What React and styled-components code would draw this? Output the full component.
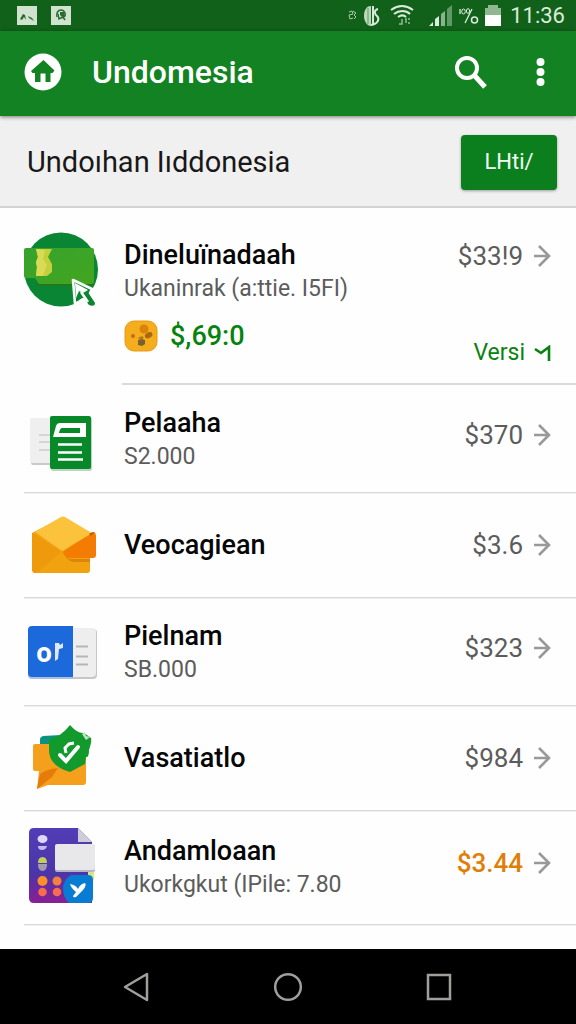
import React from "react";
import styled, { createGlobalStyle, ThemeProvider } from "styled-components";

const theme = {
  colors: {
    statusBar: "#12611b",
    primary: "#138222",
    button: "#0b7f1d",
    green: "#07820f",
    orange: "#e07f08",
    text: "#060606",
    gray: "#5c5c5c",
    line: "#d9dadb",
    subheader: "#f0f0f0",
  },
};

const GlobalStyle = createGlobalStyle`
  * {
    box-sizing: border-box;
  }

  body {
    margin: 0;
    background: #fefefe;
    font-family: Roboto, "Liberation Sans", sans-serif;
  }

  button {
    border: 0;
    padding: 0;
    background: none;
    font: inherit;
    color: inherit;
    cursor: pointer;
  }

  h1, h2, h3, p, ul {
    margin: 0;
    padding: 0;
    font-weight: 400;
  }

  svg {
    display: block;
    flex: none;
  }
`;

const Page = styled.div`
  display: flex;
  flex-direction: column;
  min-height: 100vh;
`;

const StatusBar = styled.div`
  display: flex;
  align-items: center;
  justify-content: space-between;
  height: 31px;
  padding: 0 11px 0 17px;
  background: ${({ theme }) => theme.colors.statusBar};
  color: #dcebdc;
`;

const StatusGroup = styled.div`
  display: flex;
  align-items: center;
  gap: ${({ gap }) => gap}px;
`;

const Clock = styled.time`
  padding-left: 3px;
  font-size: 22px;
  line-height: 28px;
`;

const AppBar = styled.header`
  display: flex;
  align-items: center;
  height: 85px;
  padding: 0 31px 4px 24px;
  background: ${({ theme }) => theme.colors.primary};
  box-shadow: 0 1px 4px rgba(0, 0, 0, 0.5);
  color: #fff;
  z-index: 1;
`;

const AppTitle = styled.h1`
  flex: 1;
  padding-left: 30px;
  font-size: 32px;
  line-height: 40px;
  font-weight: 500;
`;

const AppActions = styled.div`
  display: flex;
  align-items: center;
  gap: 48px;
`;

const Subheader = styled.div`
  display: flex;
  align-items: center;
  justify-content: space-between;
  height: 92px;
  padding: 2px 19px 0 27px;
  background: ${({ theme }) => theme.colors.subheader};
  border-bottom: 2px solid #d2d2d3;
`;

const SubheaderTitle = styled.h2`
  font-size: 29px;
  line-height: 36px;
  color: #181818;
`;

const ActionButton = styled.button`
  && {
    width: 96px;
    height: 55px;
    border-radius: 4px;
    background: ${({ theme }) => theme.colors.button};
    box-shadow: 0 1px 3px rgba(0, 0, 0, 0.35);
    color: #f2fff2;
    font-size: 22px;
    line-height: 28px;
  }
`;

const List = styled.ul`
  flex: 1;
  list-style: none;
`;

const paddings = {
  featured: "24px 25px 14px 0",
  double: "16px 25px 15px 0",
  single: "14px 25px 14px 0",
  last: "17px 25px 18px 0",
};

const Item = styled.li`
  display: flex;
  flex-wrap: wrap;
  column-gap: 24px;
  margin-left: 24px;
  padding: ${({ kind }) => paddings[kind]};
  border-bottom: ${({ kind, theme }) =>
    kind === "featured" ? "0" : `1px solid ${theme.colors.line}`};
  box-shadow: ${({ kind }) => (kind === "featured" ? "none" : "0 1px 0 #eeeeef")};
`;

const FeaturedLine = styled.li`
  height: 2px;
  margin-left: 122px;
  background: ${({ theme }) => theme.colors.line};
`;

const ItemBody = styled.div`
  flex: 1;
  display: flex;
  flex-direction: column;
  justify-content: ${({ featured }) => (featured ? "flex-start" : "center")};
  padding: ${({ featured }) => (featured ? "5px 0 13px" : "0")};
`;

const ItemName = styled.h3`
  font-size: 27px;
  line-height: 36px;
  font-weight: 500;
  color: ${({ theme }) => theme.colors.text};
`;

const ItemInfo = styled.p`
  font-size: 23px;
  line-height: 32px;
  color: ${({ theme }) => theme.colors.gray};
`;

const Reward = styled.div`
  display: flex;
  align-items: center;
  gap: 12px;
  padding-top: 11px;
  font-size: 27px;
  line-height: 40px;
  font-weight: 500;
  color: ${({ theme }) => theme.colors.green};
`;

const ItemSide = styled.div`
  display: flex;
  flex-direction: column;
  align-items: flex-end;
  justify-content: ${({ featured }) => (featured ? "space-between" : "center")};
  padding-top: ${({ featured }) => (featured ? "8px" : "0")};
  padding-bottom: ${({ raised }) => (raised ? "8px" : "0")};
`;

const PriceButton = styled.button`
  && {
    display: flex;
    align-items: center;
    gap: 10px;
    font-size: 26px;
    line-height: 32px;
    color: ${({ highlight, theme }) =>
      highlight ? theme.colors.orange : theme.colors.gray};
    font-weight: ${({ highlight }) => (highlight ? 500 : 400)};
  }
`;

const VersionButton = styled.button`
  && {
    display: flex;
    align-items: center;
    gap: 9px;
    font-size: 23px;
    line-height: 32px;
    color: ${({ theme }) => theme.colors.green};
  }
`;

const NavBar = styled.nav`
  display: flex;
  align-items: center;
  justify-content: center;
  gap: 122px;
  height: 75px;
  background: #000;
`;

const PictureStatusIcon = () => (
  <svg width="20" height="19" viewBox="0 0 20 19">
    <rect width="20" height="19" fill="#cfe3cf" />
    <path d="M3 13 6 8l2 1 1 5-2-3-2 3ZM11 10l4 2 2 3-5-3Z" fill="#2c6a30" />
  </svg>
);

const GlobeStatusIcon = () => (
  <svg width="20" height="19" viewBox="0 0 20 19">
    <rect width="20" height="19" fill="#cfe3cf" />
    <path d="M6 11c-1-4 1-7 4-7s5 3 4 6l-2 1" fill="none" stroke="#2c6a30" strokeWidth="1.500" />
    <path d="M9 6h4l1 4-3 1-2-2Z" fill="#2c6a30" />
    <path d="m7 8 1 5 4-2 2 3" fill="none" stroke="#2c6a30" strokeWidth="1.500" />
  </svg>
);

const StatusIcons = () => (
  <svg width="105" height="24" viewBox="351 2 105 24" fill="none">
    <path
      d="m352 10 3-1 1 3-4 1 1 4 3-1M356 9l3 2-2 2 2 2-2 2"
      stroke="#a9cbaa"
      strokeWidth="1"
    />
    <path d="M374 4c-5 0-7 5-7 10s3 10 7 10Z" fill="#bdd8bd" />
    <path d="M371 6v16" stroke="#5f9963" />
    <path
      d="M376 4v19M381 7c-4 1-4 5-1 7 3 3 1 8-6 9"
      stroke="#d8ead8"
      strokeWidth="2"
    />
    <path
      d="M394 8c7-5 15-5 22 0M397 12c5-4 12-4 16 0M401 15c3-2 6-2 8 0"
      stroke="#dcebdc"
      strokeWidth="2"
    />
    <path d="M405 17v5h-3M409 16v5m3-5v2m0 2v2" stroke="#92bd94" strokeWidth="1.500" />
    <path d="m432 24 4-4v4Z M438 17l4-3v10h-4Z" fill="#dcebdc" />
    <path d="m444 12 4-3v15h-4Z" fill="#89b58b" />
    <path d="m450 7 5-4v21h-5Z" fill="#5f9963" />
  </svg>
);

const PercentIcon = () => (
  <svg width="20" height="18" viewBox="0 0 20 18" fill="none" stroke="#dcebdc">
    <path d="M1 2v5M13 2 6 16" strokeWidth="1.300" />
    <ellipse cx="4.500" cy="4.500" rx="1.800" ry="2.500" />
    <ellipse cx="9" cy="4" rx="1.600" ry="2.300" />
    <circle cx="15.500" cy="13" r="3" strokeWidth="1.500" />
  </svg>
);

const BatteryIcon = () => (
  <svg width="16" height="21" viewBox="0 0 16 21">
    <path d="M3 0h10v3h3v9H0V3h3Z" fill="#8fb890" />
    <path d="M0 10h16v11H0Z" fill="#fff" />
  </svg>
);

const HomeIcon = () => (
  <svg width="38" height="38" viewBox="0 0 38 38">
    <circle cx="19" cy="19" r="18.500" fill="#fff" />
    <path
      d="M19.500 7 30.500 17.500 28.500 20H26.500v9h-5v-8.500h-5V29H11V20H8.500L7 18Z"
      fill="#138222"
    />
  </svg>
);

const SearchIcon = () => (
  <svg width="34" height="34" viewBox="0 0 34 34" fill="none" stroke="#fff">
    <circle cx="13" cy="13" r="10" strokeWidth="4" />
    <path d="m20 20 11 12" strokeWidth="5" />
  </svg>
);

const MoreIcon = () => (
  <svg width="9" height="28" viewBox="0 0 9 28" fill="#fff">
    <circle cx="4.500" cy="4" r="4" />
    <circle cx="4.500" cy="14" r="4" />
    <circle cx="4.500" cy="24" r="4" />
  </svg>
);

const ArrowIcon = () => (
  <svg width="18" height="22" viewBox="0 0 18 22" fill="none">
    <path d="M1 11h15M6 1l10 10L6 21" stroke="#999" strokeWidth="2.600" />
  </svg>
);

const VersionIcon = () => (
  <svg width="17" height="17" viewBox="0 0 17 17" fill="none">
    <path d="m1 4 6 4 8-6v14" stroke="#07820f" strokeWidth="2.600" />
  </svg>
);

const CoinIcon = () => (
  <svg width="34" height="32" viewBox="0 0 34 32">
    <rect x="1" y="1" width="32" height="30" rx="9" fill="#f5ad1d" stroke="#e79b13" />
    <circle cx="20" cy="9" r="4.500" fill="#d9820d" />
    <ellipse cx="24.500" cy="15.500" rx="4" ry="2.700" transform="rotate(-25 24 15)" fill="#a7690f" />
    <circle cx="9" cy="16" r="2" fill="#bc710c" />
    <path d="m14 20 4-1 3 1v4l-3 2-4-1Z" fill="#776232" />
    <path d="m14 18 4-2 2 2-4 2Z" fill="#b87414" />
  </svg>
);

const CashArt = () => (
  <svg width="76" height="76" viewBox="24 232 76 76">
    <defs>
      <linearGradient id="cash" x1="0" y1="0" x2="1" y2="1">
        <stop offset="0" stopColor="#36a32e" />
        <stop offset="1" stopColor="#43a51f" />
      </linearGradient>
    </defs>
    <circle cx="61" cy="269.500" r="37" fill="#0a8534" />
    <path d="M36 277h58v7q0 2-2 2H41q-3 0-5-5Z" fill="#26781a" />
    <path d="M24 250q0-2 2-2h66q2 0 2 2v32q0 2-2 2H39l-4-6h-9q-2 0-2-2Z" fill="url(#cash)" />
    <path d="M36 249h16l-4 8 4 7v8l-5 4H36l1-9-1-5 2-5Z" fill="#c4cf3c" />
    <path d="m36 249 9 1-2 9 4 6-4 11h-7l1-9-1-5 2-5Z" fill="#dadb55" />
    <path
      d="m73 280 19 9-2 4 6 9q1 5-4 5-4 0-6-4l-3-4-8 5Z"
      fill="#0a8534"
      stroke="#fff"
      strokeWidth="2.600"
      strokeLinejoin="round"
    />
    <path d="m75 283 13 7-5 3-4-2-3 7Z" fill="#fff" />
    <path d="m81 292 7 10" stroke="#fff" strokeWidth="2.500" />
    <path d="m78 293 1 7-2 1Z" fill="#0a8534" />
  </svg>
);

const SheetArt = () => (
  <svg width="76" height="76" viewBox="24 401 76 76">
    <rect x="31" y="419" width="25" height="46" rx="2" fill="#c9c9c9" />
    <rect x="30" y="418" width="26" height="45" rx="2" fill="#efefef" />
    <path d="M39 435h12M39 442h12M39 450h12" stroke="#bbb" />
    <rect x="51" y="417" width="41" height="54" rx="2" fill="#bdd4be" />
    <rect x="50" y="416" width="41" height="53" rx="2" fill="#07892a" />
    <path
      d="M53 437 56 426q1-3 4-3h26v14Zm6-4h21v-5H62q-2 0-3 5Z"
      fill="#fff"
      fillRule="evenodd"
    />
    <path d="M58 444.500h24M58 452.500h24M58 459.500h25" stroke="#fff" strokeWidth="2.500" />
  </svg>
);

const EnvelopeArt = () => (
  <svg width="76" height="76" viewBox="24 507 76 76">
    <path d="m32 533 29-15q2-1 4 0l25 15v37q0 3-3 3H35q-3 0-3-4Z" fill="#f2a012" />
    <path d="m32 533 30 19-26 21q-4 0-4-4Z" fill="#ef990c" />
    <path d="m62 551-25 22h48q5 0 5-4v-14Z" fill="#f1a20e" />
    <path d="m62 551 7 8h21v3H73q-5 0-11-11" fill="#dc850a" />
    <path d="m90 533 4-1q2 1 2 4v19q0 3-3 3H69q-4-2-6-6Z" fill="#f57c03" />
    <path d="m89 533 6-1-4 4Z" fill="#bd6200" />
    <path d="m35 532 26-15q2-1 4 0l25 15-1 3-27 16Z" fill="#fbc33b" />
  </svg>
);

const OfficeWord = styled.text`
  font: 700 26px "Open Sans", sans-serif;
  fill: #fff;
`;

const OfficeArt = () => (
  <svg width="76" height="76" viewBox="24 614 76 76">
    <rect x="62" y="629" width="35" height="50" rx="4" fill="#c6c6c8" />
    <rect x="62" y="628" width="34" height="49" rx="4" fill="#eeeeef" />
    <path d="M76 646.500h12M76 656.500h12M76 664.500h12" stroke="#b5b5b8" strokeWidth="2" />
    <path d="M32 627h41v52H32q-4 0-4-4v-44q0-4 4-4Z" fill="#aabfe0" />
    <path d="M32 626h41v51H32q-4 0-4-4v-43q0-4 4-4Z" fill="#1c69dc" />
    <OfficeWord x="36" y="662">
      o
    </OfficeWord>
    <path d="M55 643h4l1 2 3-2v5l-4 1-1 10-3 2Z" fill="#dce9ff" />
  </svg>
);

const ShieldArt = () => (
  <svg width="76" height="76" viewBox="24 720 76 76">
    <path d="M40 747v-8q0-2 3-3l18-1v14Z" fill="#0b9280" />
    <path d="M35 744h50q1 0 1 3v35q0 3-3 3H48l-11 4 2-18h-4q-2 0-2-2v-23q0-2 2-2Z" fill="#f5a01c" />
    <path d="m58 768-6 9-15 12 3-15q7-5 18-6Z" fill="#e77b0a" />
    <path
      d="M70 725q8 9 14 8l7 5q1 3-2 12 0 8-3 7l-1 7-15 8q-21-6-21-22V739q12-2 21-14Z"
      fill="#129a2c"
    />
    <path d="m82 734 3-2 1 4 4 1-4 3" fill="#bfe5c4" />
    <path d="m60 755 6 6 12-14" fill="none" stroke="#fff" strokeWidth="4" strokeLinecap="round" />
    <path d="m66 753-1-5 4-4 5-1" fill="none" stroke="#fff" strokeWidth="3" />
  </svg>
);

const CalculatorArt = () => (
  <svg width="76" height="78" viewBox="24 828 76 78">
    <defs>
      <linearGradient id="calc" x1="0" y1="0" x2="0" y2="1">
        <stop offset="0" stopColor="#533db7" />
        <stop offset="0.6" stopColor="#4a36a8" />
        <stop offset="1" stopColor="#8a1e94" />
      </linearGradient>
    </defs>
    <path d="M34 828h44l14 14v61H34q-5 0-5-5v-65q0-5 5-5Z" fill="url(#calc)" />
    <path d="m78 828 14 14H78Z" fill="#cfcdd6" />
    <ellipse cx="42.500" cy="839" rx="5" ry="4" fill="#ddd9f6" />
    <path d="M38 846h9q-1 4-5 4t-4-4Z" fill="#c3bdee" />
    <path d="M38 863q0-6 4.500-6t4.500 6Z" fill="#c3ce52" />
    <path d="M38 864h9q0 7-4.500 7t-4.500-7Z" fill="#a29bb0" />
    <circle cx="42.500" cy="881" r="5" fill="#fb902b" />
    <circle cx="57" cy="881" r="4.500" fill="#f3803b" />
    <circle cx="42.500" cy="892" r="4.300" fill="#f66c4e" />
    <circle cx="57" cy="892" r="4.300" fill="#f66c4e" />
    <rect x="55" y="845" width="40" height="27" rx="2" fill="#b6b4c4" />
    <rect x="55" y="844" width="40" height="26" rx="2" fill="#e8e8ea" />
    <path d="M88 872h6v9l-6-6Z" fill="#dce481" />
    <path d="M71 875h17q5 0 5 5v18q0 5-5 5H69q-6-6-6-14 0-9 8-14Z" fill="#087bd2" />
    <path
      d="M70 884q6 1 8 5 2-5 7-6 2 2-2 7l-7 7q-3 1-3-1l3-4q-5-4-6-8Z"
      fill="#fff"
    />
  </svg>
);

const items = [
  {
    kind: "featured",
    art: CashArt,
    name: "Dineluïnadaah",
    info: "Ukaninrak (a:ttie. I5FI)",
    reward: "$,69:0",
    price: "$33!9",
    version: "Versi",
  },
  { kind: "double", art: SheetArt, name: "Pelaaha", info: "S2.000", price: "$370" },
  { kind: "single", art: EnvelopeArt, name: "Veocagiean", price: "$3.6" },
  { kind: "double", art: OfficeArt, name: "Pielnam", info: "SB.000", price: "$323" },
  { kind: "single", art: ShieldArt, name: "Vasatiatlo", price: "$984" },
  {
    kind: "last",
    art: CalculatorArt,
    name: "Andamloaan",
    info: "Ukorkgkut (IPile: 7.80",
    price: "$3.44",
    highlight: true,
  },
];

const ListItem = ({ item }) => {
  const { kind, art: Art, name, info, reward, price, version, highlight } = item;
  const featured = kind === "featured";

  return (
    <Item kind={kind}>
      <Art />
      <ItemBody featured={featured}>
        <ItemName>{name}</ItemName>
        {info && <ItemInfo>{info}</ItemInfo>}
        {reward && (
          <Reward>
            <CoinIcon />
            {reward}
          </Reward>
        )}
      </ItemBody>
      <ItemSide featured={featured} raised={!featured && !!info}>
        <PriceButton highlight={highlight}>
          {price}
          <ArrowIcon />
        </PriceButton>
        {version && (
          <VersionButton>
            {version}
            <VersionIcon />
          </VersionButton>
        )}
      </ItemSide>
    </Item>
  );
};

const App = () => (
  <ThemeProvider theme={theme}>
    <GlobalStyle />
    <Page>
      <StatusBar>
        <StatusGroup gap={14}>
          <PictureStatusIcon />
          <GlobeStatusIcon />
        </StatusGroup>
        <StatusGroup gap={6}>
          <StatusIcons />
          <PercentIcon />
          <BatteryIcon />
          <Clock>11:36</Clock>
        </StatusGroup>
      </StatusBar>
      <AppBar>
        <button aria-label="Home">
          <HomeIcon />
        </button>
        <AppTitle>Undomesia</AppTitle>
        <AppActions>
          <button aria-label="Search">
            <SearchIcon />
          </button>
          <button aria-label="More options">
            <MoreIcon />
          </button>
        </AppActions>
      </AppBar>
      <Subheader>
        <SubheaderTitle>Undoıhan Iıddonesia</SubheaderTitle>
        <ActionButton>LHti/</ActionButton>
      </Subheader>
      <List>
        {items.map((item) => (
          <React.Fragment key={item.name}>
            <ListItem item={item} />
            {item.kind === "featured" && <FeaturedLine role="separator" />}
          </React.Fragment>
        ))}
      </List>
      <NavBar>
        <button aria-label="Back">
          <svg width="28" height="30" viewBox="0 0 28 30" fill="none" stroke="#a19e9b">
            <path d="M2 15 24 2v26Z" strokeWidth="2.500" strokeLinejoin="round" />
          </svg>
        </button>
        <button aria-label="Home screen">
          <svg width="30" height="30" viewBox="0 0 30 30" fill="none" stroke="#a19e9b">
            <circle cx="15" cy="15" r="12.800" strokeWidth="2.500" />
          </svg>
        </button>
        <button aria-label="Recent apps">
          <svg width="28" height="30" viewBox="0 0 28 30" fill="none" stroke="#a19e9b">
            <rect x="3" y="3" width="22" height="24" strokeWidth="2.500" />
          </svg>
        </button>
      </NavBar>
    </Page>
  </ThemeProvider>
);

export default App;
